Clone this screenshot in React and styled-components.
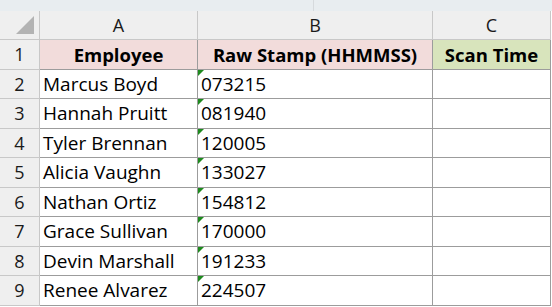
import React from 'react'
import styled, {createGlobalStyle} from 'styled-components'

const GlobalStyle = createGlobalStyle`
    html, body {
        margin: 0;
        padding: 0;
        background: #ffffff;
    }
    body {
        font-family: "Open Sans", "Liberation Sans", sans-serif;
    }
`

const Sheet = styled.div`
    width: 552px;
    height: 307px;
    overflow: hidden;
    background: #ffffff;
`
const TopStrip = styled.div`
    display: flex;
    height: 11px;
    background: #e8edf0;
`
const StripBox = styled.div`
    width: ${p => p.w}px;
    border-right: 1px solid #d6dadd;
`
const Grid = styled.div`
    display: grid;
    grid-template-columns: 40px 158px 235px 118px;
    grid-template-rows: 29px repeat(9, 29.5px);
`
const Corner = styled.div`
    position: relative;
    background: #efefef;
    border-right: 1px solid #c8c8c8;
    border-bottom: 1px solid #c8c8c8;
`
const CornerMark = styled.div`
    position: absolute;
    right: 5px;
    bottom: 5px;
    width: 0;
    height: 0;
    border-left: 18px solid transparent;
    border-bottom: 18px solid #b3b3b3;
`
const ColHead = styled.div`
    display: flex;
    align-items: center;
    justify-content: center;
    background: #efefef;
    border-right: 1px solid #c8c8c8;
    border-bottom: 1px solid #c8c8c8;
    font-size: 18px;
    color: #1a1a1a;
`
const RowHead = styled.div`
    display: flex;
    align-items: center;
    justify-content: center;
    background: #efefef;
    border-right: 1px solid #c8c8c8;
    border-bottom: 1px solid #c8c8c8;
    font-size: 18px;
    color: #1a1a1a;
`
const TitleCell = styled.div`
    display: flex;
    align-items: center;
    justify-content: center;
    background: ${p => p.fill};
    border-right: 1px solid #9c9c9c;
    border-bottom: 1px solid #9c9c9c;
    font-size: 18.5px;
    font-weight: 700;
    color: #000;
`
const Cell = styled.div`
    position: relative;
    display: flex;
    align-items: center;
    padding-left: 3px;
    border-right: 1px solid #9c9c9c;
    border-bottom: 1px solid #9c9c9c;
    font-size: 19px;
    color: #000;
`
const TextFlag = styled.span`
    position: absolute;
    left: 0;
    top: 0;
    width: 0;
    height: 0;
    border-top: 6px solid #1e8a1e;
    border-right: 6px solid transparent;
`

const rows = [
    ['Marcus Boyd', '073215'],
    ['Hannah Pruitt', '081940'],
    ['Tyler Brennan', '120005'],
    ['Alicia Vaughn', '133027'],
    ['Nathan Ortiz', '154812'],
    ['Grace Sullivan', '170000'],
    ['Devin Marshall', '191233'],
    ['Renee Alvarez', '224507'],
]

const App = () => {
  return (
    <Sheet>
        <GlobalStyle />
        <TopStrip>
            <StripBox w={313} />
        </TopStrip>
        <Grid>
            <Corner><CornerMark /></Corner>
            <ColHead>A</ColHead>
            <ColHead>B</ColHead>
            <ColHead>C</ColHead>

            <RowHead>1</RowHead>
            <TitleCell fill="#f2dcdb">Employee</TitleCell>
            <TitleCell fill="#f2dcdb">Raw Stamp (HHMMSS)</TitleCell>
            <TitleCell fill="#d8e4bc">Scan Time</TitleCell>

            {rows.map(([name, stamp], i) => (
                <React.Fragment key={name}>
                    <RowHead>{i + 2}</RowHead>
                    <Cell>{name}</Cell>
                    <Cell><TextFlag />{stamp}</Cell>
                    <Cell />
                </React.Fragment>
            ))}
        </Grid>
    </Sheet>
  )
}

export default App
